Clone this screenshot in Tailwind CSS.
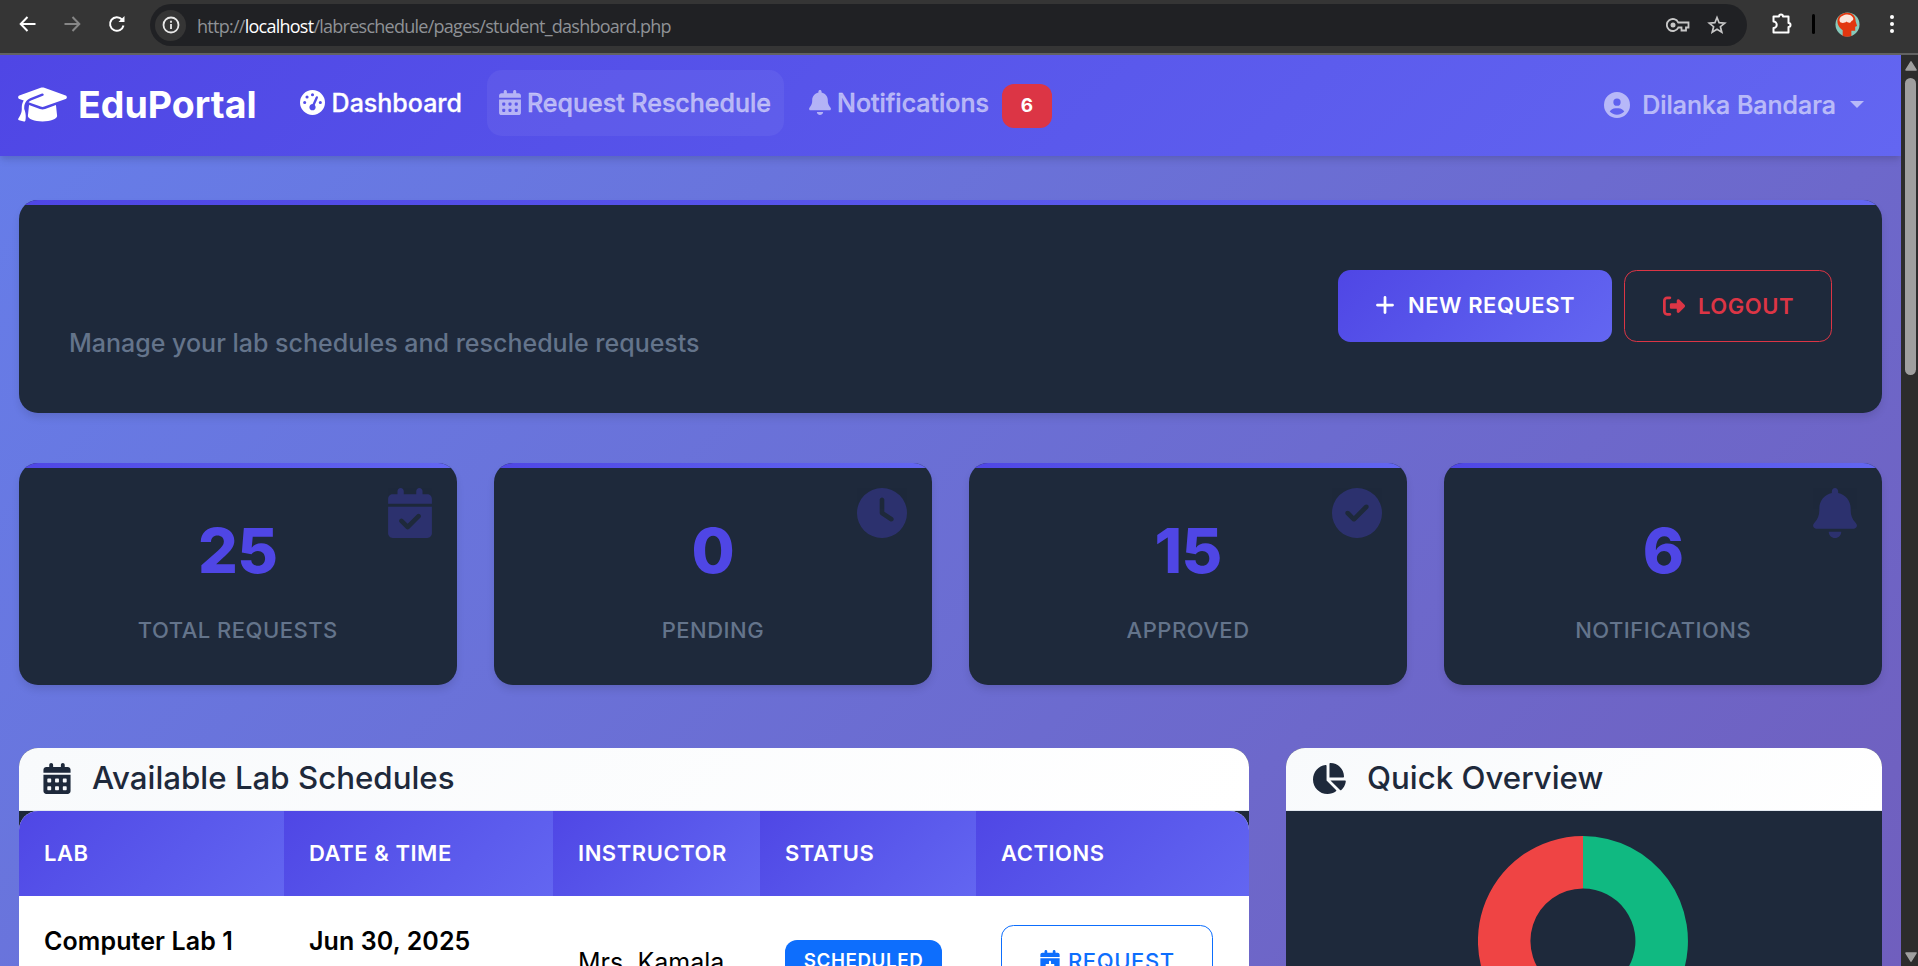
<!DOCTYPE html>
<html lang="en">
<head>
<meta charset="utf-8">
<title>EduPortal - Student Dashboard</title>
<script src="https://cdn.jsdelivr.net/npm/@tailwindcss/browser@4"></script>
</head>
<body class="w-[1918px] h-[966px] overflow-hidden flex flex-col bg-[#353535] font-[Inter,sans-serif]">
<svg class="hidden">
  <symbol id="cap" viewBox="0 0 640 512"><path d="M320 32c-8.1 0-16.1 1.4-23.7 4.1L15.8 137.4C6.3 140.9 0 149.9 0 160s6.3 19.1 15.8 22.6l57.9 20.9C57.3 229.3 48 259.8 48 291.9l0 28.1c0 28.4-10.8 57.7-22.3 80.8c-6.5 13-13.9 25.8-22.5 37.6C0 442.7-.9 448.3 .9 453.4s6 8.9 11.2 10.2l64 16c4.2 1.1 8.7 .3 12.4-2s6.3-6.1 7.1-10.4c8.6-42.8 4.3-81.2-2.1-108.7C90.3 344.3 86 329.8 80 316.5l0-24.6c0-30.2 10.2-58.7 27.9-81.5c12.9-15.5 29.6-28 49.2-35.7l157-61.7c8.2-3.2 17.5 .8 20.7 9s-.8 17.5-9 20.7l-157 61.7c-12.4 4.9-23.3 12.4-32.2 21.6l159.6 57.6c7.6 2.7 15.6 4.1 23.7 4.1s16.1-1.4 23.7-4.1L624.2 182.6c9.5-3.4 15.8-12.5 15.8-22.6s-6.3-19.1-15.8-22.6L343.7 36.1C336.1 33.4 328.1 32 320 32zM128 408c0 35.3 86 72 192 72s192-36.7 192-72L496.7 262.6 354.5 314c-11.1 4-22.8 6-34.5 6s-23.5-2-34.5-6L143.3 262.6 128 408z"/></symbol>
  <symbol id="gauge" viewBox="0 0 512 512"><path fill-rule="evenodd" d="M0 256a256 256 0 1 1 512 0A256 256 0 1 1 0 256zM288 96a32 32 0 1 0 -64 0 32 32 0 1 0 64 0zM256 416c35.3 0 64-28.7 64-64c0-17.4-6.9-33.1-18.1-44.6L366 161.7c5.3-12.1-.2-26.3-12.3-31.6s-26.3 .2-31.6 12.3L257.9 288c-.6 0-1.3 0-1.9 0c-35.3 0-64 28.7-64 64s28.7 64 64 64zM176 144a32 32 0 1 0 -64 0 32 32 0 1 0 64 0zM96 288a32 32 0 1 0 0-64 32 32 0 1 0 0 64zm352-32a32 32 0 1 0 -64 0 32 32 0 1 0 64 0z"/></symbol>
  <symbol id="days" viewBox="0 0 448 512"><path d="M128 0c17.7 0 32 14.3 32 32l0 32 128 0 0-32c0-17.7 14.3-32 32-32s32 14.3 32 32l0 32 48 0c26.5 0 48 21.5 48 48l0 48L0 160l0-48C0 85.5 21.5 64 48 64l48 0 0-32c0-17.7 14.3-32 32-32zM0 192l448 0 0 272c0 26.5-21.5 48-48 48L48 512c-26.5 0-48-21.5-48-48L0 192zm64 80l0 32c0 8.8 7.2 16 16 16l32 0c8.8 0 16-7.2 16-16l0-32c0-8.8-7.2-16-16-16l-32 0c-8.8 0-16 7.2-16 16zm128 0l0 32c0 8.8 7.2 16 16 16l32 0c8.8 0 16-7.2 16-16l0-32c0-8.8-7.2-16-16-16l-32 0c-8.8 0-16 7.2-16 16zm144-16c-8.8 0-16 7.2-16 16l0 32c0 8.8 7.2 16 16 16l32 0c8.8 0 16-7.2 16-16l0-32c0-8.8-7.2-16-16-16l-32 0zM64 400l0 32c0 8.8 7.2 16 16 16l32 0c8.8 0 16-7.2 16-16l0-32c0-8.8-7.2-16-16-16l-32 0c-8.8 0-16 7.2-16 16zm144-16c-8.8 0-16 7.2-16 16l0 32c0 8.8 7.2 16 16 16l32 0c8.8 0 16-7.2 16-16l0-32c0-8.8-7.2-16-16-16l-32 0zm112 16l0 32c0 8.8 7.2 16 16 16l32 0c8.8 0 16-7.2 16-16l0-32c0-8.8-7.2-16-16-16l-32 0c-8.8 0-16 7.2-16 16z"/></symbol>
  <symbol id="bell" viewBox="0 0 448 512"><path d="M224 0c-17.7 0-32 14.3-32 32l0 19.2C119 66 64 130.6 64 208l0 18.8c0 47-17.3 92.4-48.5 127.6l-7.4 8.3c-8.4 9.4-10.4 22.9-5.3 34.4S19.4 416 32 416l384 0c12.6 0 24-7.4 29.2-18.9s3.1-25-5.3-34.4l-7.4-8.3C401.3 319.2 384 273.9 384 226.8l0-18.8c0-77.4-55-142-128-156.8L256 32c0-17.7-14.3-32-32-32zm45.3 493.3c12-12 18.7-28.3 18.7-45.3l-64 0-64 0c0 17 6.7 33.3 18.7 45.3s28.3 18.7 45.3 18.7s33.3-6.7 45.3-18.7z"/></symbol>
  <symbol id="user" viewBox="0 0 512 512"><path fill-rule="evenodd" d="M399 384.2C376.9 345.8 335.4 320 288 320l-64 0c-47.4 0-88.9 25.8-111 64.2c35.2 39.2 86.2 63.8 143 63.8s107.8-24.7 143-63.8zM0 256a256 256 0 1 1 512 0A256 256 0 1 1 0 256zm256 16a72 72 0 1 0 0-144 72 72 0 1 0 0 144z"/></symbol>
  <symbol id="plus" viewBox="0 0 448 512"><path d="M256 80c0-17.7-14.3-32-32-32s-32 14.3-32 32l0 144L48 224c-17.7 0-32 14.3-32 32s14.3 32 32 32l144 0 0 144c0 17.7 14.3 32 32 32s32-14.3 32-32l0-144 144 0c17.7 0 32-14.3 32-32s-14.3-32-32-32l-144 0 0-144z"/></symbol>
  <symbol id="out" viewBox="0 0 512 512"><path d="M377.9 105.9L500.7 228.7c7.2 7.2 11.3 17.1 11.3 27.3s-4.1 20.1-11.3 27.3L377.9 406.1c-6.4 6.4-15 9.9-24 9.9c-18.7 0-33.9-15.2-33.9-33.9l0-62.1-128 0c-17.7 0-32-14.3-32-32l0-64c0-17.7 14.3-32 32-32l128 0 0-62.1c0-18.7 15.2-33.9 33.9-33.9c9 0 17.6 3.6 24 9.9zM160 96L96 96c-17.7 0-32 14.3-32 32l0 256c0 17.7 14.3 32 32 32l64 0c17.7 0 32 14.3 32 32s-14.3 32-32 32l-64 0c-53 0-96-43-96-96L0 128C0 75 43 32 96 32l64 0c17.7 0 32 14.3 32 32s-14.3 32-32 32z"/></symbol>
  <symbol id="calcheck" viewBox="0 0 448 512"><path d="M128 0c17.7 0 32 14.3 32 32l0 32 128 0 0-32c0-17.7 14.3-32 32-32s32 14.3 32 32l0 32 48 0c26.5 0 48 21.5 48 48l0 48L0 160l0-48C0 85.5 21.5 64 48 64l48 0 0-32c0-17.7 14.3-32 32-32zM0 192l448 0 0 272c0 26.5-21.5 48-48 48L48 512c-26.5 0-48-21.5-48-48L0 192zM329 305c9.4-9.4 9.4-24.6 0-33.9s-24.6-9.4-33.9 0l-95 95-47-47c-9.4-9.4-24.6-9.4-33.9 0s-9.4 24.6 0 33.9l64 64c9.4 9.4 24.6 9.4 33.9 0L329 305z"/></symbol>
  <symbol id="clock" viewBox="0 0 512 512"><path fill-rule="evenodd" d="M256 0a256 256 0 1 1 0 512A256 256 0 1 1 256 0zM232 120l0 136c0 8 4 15.5 10.7 20l96 64c11 7.4 25.9 4.4 33.3-6.7s4.4-25.9-6.7-33.3L280 243.2 280 120c0-13.3-10.7-24-24-24s-24 10.7-24 24z"/></symbol>
  <symbol id="check" viewBox="0 0 512 512"><path fill-rule="evenodd" d="M256 512A256 256 0 1 0 256 0a256 256 0 1 0 0 512zM369 209L241 337c-9.4 9.4-24.6 9.4-33.9 0l-64-64c-9.4-9.4-9.4-24.6 0-33.9s24.6-9.4 33.9 0l47 47L335 175c9.4-9.4 24.6-9.4 33.9 0s9.4 24.6 0 33.9z"/></symbol>
  <symbol id="pie" viewBox="0 0 576 512"><path d="M304 240l0-223.4c0-9 7-16.6 16-16.6C443.7 0 544 100.3 544 224c0 9-7.6 16-16.6 16L304 240zM32 272C32 150.7 122.1 50.3 239 34.3c9.2-1.3 17 6.1 17 15.4L256 288 412.5 444.5c6.7 6.7 6.2 17.7-1.5 23.1C371.8 495.6 323.8 512 272 512C139.5 512 32 404.6 32 272zm526.4 16c9.3 0 16.6 7.8 15.4 17c-7.7 55.9-34.6 105.6-73.9 142.3c-6 5.6-15.4 5.2-21.2-.7L320 288l238.4 0z"/></symbol>
  <symbol id="calplus" viewBox="0 0 448 512"><path fill-rule="evenodd" d="M128 0c17.7 0 32 14.3 32 32l0 32 128 0 0-32c0-17.7 14.3-32 32-32s32 14.3 32 32l0 32 48 0c26.5 0 48 21.5 48 48l0 48L0 160l0-48C0 85.5 21.5 64 48 64l48 0 0-32c0-17.7 14.3-32 32-32zM0 192l448 0 0 272c0 26.5-21.5 48-48 48L48 512c-26.5 0-48-21.5-48-48L0 192zM248 272c0-13.3-10.7-24-24-24s-24 10.7-24 24v56H144c-13.3 0-24 10.7-24 24s10.7 24 24 24h56v56c0 13.3 10.7 24 24 24s24-10.7 24-24V376h56c13.3 0 24-10.7 24-24s-10.7-24-24-24H248V272z"/></symbol>
</svg>

<!-- Browser toolbar -->
<header class="h-[55px] shrink-0 flex items-start border-b-2 border-[#626262] bg-[#353535]">
  <div class="w-[150px] h-[48px] pl-[18px] flex items-center gap-[26px]">
    <svg class="w-[19px] h-[18px]" viewBox="0 0 19 18" fill="none" stroke="#fff" stroke-width="2"><path d="M17.5 9H3M9.5 2L2.7 9l6.800 7"/></svg>
    <svg class="w-[19px] h-[18px]" viewBox="0 0 19 18" fill="none" stroke="#868686" stroke-width="2"><path d="M1.500 9H16M9.500 2l6.800 7-6.800 7"/></svg>
    <svg class="w-[18px] h-[18px]" viewBox="0 0 18 18" fill="none" stroke="#fff" stroke-width="2"><path d="M15.500 10.500A6.800 6.800 0 1 1 14 4.500"/><path d="M16.500 1v6h-6z" fill="#fff" stroke="none"/></svg>
  </div>
  <div class="mt-1 w-[1597px] h-[42px] rounded-full bg-[#202124] flex items-center pl-[5px] pr-[20px]">
    <div class="size-[31px] rounded-full bg-[#353535] grid place-items-center">
      <svg class="size-[18px]" viewBox="0 0 18 18" fill="none" stroke="#e8e8e8" stroke-width="1.800"><circle cx="9" cy="9" r="7.500"/><path d="M9 8v5M9 4.700v2"/></svg>
    </div>
    <div class="ml-[11px] mt-px flex-1 text-[18px] leading-[24px] whitespace-nowrap font-['Open_Sans',sans-serif] text-[#8f9296] tracking-[-0.74px]">http://<span class="text-white">localhost</span>/labreschedule/pages/student_dashboard.php</div>
    <svg class="w-[24px] h-[16px]" viewBox="0 0 24 16" fill="none" stroke="#c7c7c7" stroke-width="1.800"><path d="M12.300 5.500A6 6 0 1 0 12.300 10.500H15.500V13.500H20V10.500H22.500V5.500z"/><circle cx="7" cy="8" r="2.500" fill="#c7c7c7" stroke="none"/></svg>
    <svg class="ml-[17px] size-[20px]" viewBox="0 0 20 20" fill="none" stroke="#c7c7c7" stroke-width="1.700"><path d="M10 2.500l2.100 5.200 5.600.4-4.300 3.600 1.400 5.500L10 14.200l-4.800 3 1.400-5.500L2.300 8.100l5.600-.4z"/></svg>
  </div>
  <div class="h-[48px] flex-1 flex items-center">
    <svg class="ml-[24px] size-[22px]" viewBox="0 0 22 22" fill="none" stroke="#fff" stroke-width="2" stroke-linejoin="round"><path d="M2.500 3.500H8a2 2 0 0 1 4 0h5.500V10a2 2 0 0 1 0 4v5.500H2.500V15a3.200 3.200 0 0 0 0-6.500z"/></svg>
    <div class="ml-[19px] w-[3px] h-[20px] rounded bg-black"></div>
    <svg class="ml-[20px] size-[25px]" viewBox="0 0 26 26"><circle cx="13" cy="13" r="12.500" fill="#86c9bb"/><path d="M8 24.500V19C3.500 16 1.500 11 3 6.500 5 2 10 .5 13 .7c6 .2 8.500 4.300 8.500 9.300l1.500 4.500-2 .8v4.200h-4v5.500c-3 1-6 1-9 0z" fill="#e2360f"/><path d="M5 10c-1-2 0-5 3-6 3-2 8-2 10 1 2 2 1 4-1 4.500-1 2.500-4 1.500-5 .5-2 2-6 2-7 0z" fill="#fbe5dc"/></svg>
    <svg class="ml-[29px] w-[6px] h-[20px]" viewBox="0 0 6 20" fill="#fff"><circle cx="3" cy="3" r="2"/><circle cx="3" cy="10" r="2"/><circle cx="3" cy="17" r="2"/></svg>
  </div>
</header>

<div class="flex h-[911px]">
  <div class="w-[1901px] h-[911px] overflow-hidden bg-[linear-gradient(135deg,#667eea_0%,#764ba2_100%)] bg-[length:1901px_2684px] bg-no-repeat">
    <!-- Navigation -->
    <nav class="h-[101px] pl-[18px] pr-[37px] flex items-center bg-linear-135 from-[#4f46e5] to-[#6366f1] shadow-[0_5px_8px_-1px_rgba(0,0,0,0.1),0_3px_5px_-1px_rgba(0,0,0,0.06)] text-white/55 text-[25px] leading-[38px] font-medium">
      <a class="-mt-[2px] flex items-center text-white font-bold text-[37.5px]"><svg class="w-[49px] h-[39px] fill-current"><use href="#cap"/></svg><span class="ml-[11px]">EduPortal</span></a>
      <div class="flex items-center ml-[31px] -mt-[6px]">
        <a class="h-[66px] px-[12px] flex items-center text-white"><svg class="size-[25px] fill-current"><use href="#gauge"/></svg><span class="ml-[7px] [-webkit-text-stroke:0.3px]">Dashboard</span></a>
        <a class="ml-[13px] w-[297px] h-[66px] px-[12px] flex items-center rounded-[15px] bg-white/5"><svg class="w-[22px] h-[25px] fill-current"><use href="#days"/></svg><span class="ml-[6px] [-webkit-text-stroke:0.3px]">Request Reschedule</span></a>
        <a class="ml-[13px] h-[66px] px-[12px] flex items-center"><svg class="w-[22px] h-[25px] fill-current"><use href="#bell"/></svg><span class="ml-[6px] [-webkit-text-stroke:0.3px]">Notifications</span><span class="ml-[13px] mt-[6px] w-[50px] h-[44px] rounded-[12px] bg-[#dc3545] text-white text-[19px] font-bold grid place-items-center">6</span></a>
      </div>
      <a class="ml-auto -mt-[2px] flex items-center"><svg class="size-[26px] fill-current"><use href="#user"/></svg><span class="ml-[12px] [-webkit-text-stroke:0.2px]">Dilanka Bandara</span><svg class="ml-[14px] w-[14px] h-[7px] fill-current" viewBox="0 0 14 7"><path d="M0 0h14L7 7z"/></svg></a>
    </nav>

    <main class="px-[19px] pt-[44px]">
      <!-- Welcome card -->
      <section class="h-[213px] rounded-[19px] overflow-hidden bg-[#1e293b] flex flex-col shadow-[0_5px_8px_-1px_rgba(0,0,0,0.12)]">
        <div class="h-[5px] bg-linear-to-r from-[#4f46e5] to-[#6366f1]"></div>
        <div class="flex-1 flex items-start justify-between px-[50px]">
          <p class="mt-[119px] text-[25px] leading-[38px] font-medium text-[#64748b]">Manage your lab schedules and reschedule requests</p>
          <div class="mt-[65px] flex gap-[12px] text-[22px] leading-[30px] font-semibold">
            <a class="w-[274px] h-[72px] pb-[2px] rounded-[12.5px] bg-linear-135 from-[#4f46e5] to-[#6366f1] text-white flex items-center pl-[37px]"><svg class="w-[20px] h-[22px] fill-current"><use href="#plus"/></svg><span class="ml-[13px] tracking-[0.55px]">NEW REQUEST</span></a>
            <a class="w-[208px] h-[72px] rounded-[12.5px] border border-[#dc3545] text-[#dc3545] flex items-center pl-[38px]"><svg class="size-[22px] fill-current"><use href="#out"/></svg><span class="ml-[13px] tracking-[0.55px]">LOGOUT</span></a>
          </div>
        </div>
      </section>

      <!-- Statistics -->
      <section class="mt-[50px] grid grid-cols-4 gap-x-[37.500px] text-center">
        <div class="relative h-[222px] rounded-[19px] overflow-hidden bg-[#1e293b] shadow-[0_5px_8px_-1px_rgba(0,0,0,0.12)]"><div class="h-[5px] bg-linear-to-r from-[#4f46e5] to-[#6366f1]"></div><svg class="absolute top-[25px] right-[25px] w-[44px] h-[50px] fill-[#4f46e5] opacity-30"><use href="#calcheck"/></svg><div class="mt-[45px] text-[62.500px] leading-[75px] font-extrabold tracking-[-0.5px] text-[#4f46e5]">25</div><div class="mt-[27px] text-[22px] leading-[30px] font-medium tracking-[0.500px] text-[#64748b]">TOTAL REQUESTS</div></div>
        <div class="relative h-[222px] rounded-[19px] overflow-hidden bg-[#1e293b] shadow-[0_5px_8px_-1px_rgba(0,0,0,0.12)]"><div class="h-[5px] bg-linear-to-r from-[#4f46e5] to-[#6366f1]"></div><svg class="absolute top-[25px] right-[25px] size-[50px] fill-[#4f46e5] opacity-30"><use href="#clock"/></svg><div class="mt-[45px] text-[62.500px] leading-[75px] font-extrabold tracking-[-0.5px] text-[#4f46e5]">0</div><div class="mt-[27px] text-[22px] leading-[30px] font-medium tracking-[0.500px] text-[#64748b]">PENDING</div></div>
        <div class="relative h-[222px] rounded-[19px] overflow-hidden bg-[#1e293b] shadow-[0_5px_8px_-1px_rgba(0,0,0,0.12)]"><div class="h-[5px] bg-linear-to-r from-[#4f46e5] to-[#6366f1]"></div><svg class="absolute top-[25px] right-[25px] size-[50px] fill-[#4f46e5] opacity-30"><use href="#check"/></svg><div class="mt-[45px] text-[62.500px] leading-[75px] font-extrabold tracking-[-0.5px] text-[#4f46e5]">15</div><div class="mt-[27px] text-[22px] leading-[30px] font-medium tracking-[0.500px] text-[#64748b]">APPROVED</div></div>
        <div class="relative h-[222px] rounded-[19px] overflow-hidden bg-[#1e293b] shadow-[0_5px_8px_-1px_rgba(0,0,0,0.12)]"><div class="h-[5px] bg-linear-to-r from-[#4f46e5] to-[#6366f1]"></div><svg class="absolute top-[25px] right-[25px] w-[44px] h-[50px] fill-[#4f46e5] opacity-30"><use href="#bell"/></svg><div class="mt-[45px] text-[62.500px] leading-[75px] font-extrabold tracking-[-0.5px] text-[#4f46e5]">6</div><div class="mt-[27px] text-[22px] leading-[30px] font-medium tracking-[0.500px] text-[#64748b]">NOTIFICATIONS</div></div>
      </section>

      <section class="mt-[63px] flex gap-[37px]">
        <!-- Lab schedule table -->
        <div class="w-[1230px] h-[260px] rounded-t-[19px] overflow-hidden bg-[#1e293b]">
          <h2 class="h-[63px] pl-[24px] pb-[2px] flex items-center border-b border-[#e2e8f0] bg-linear-135 from-[#f8fafc] to-white text-[31.250px] leading-[38px] font-medium text-[#1e293b]"><svg class="w-[28px] h-[31px] fill-current"><use href="#days"/></svg><span class="ml-[21px]">Available Lab Schedules</span></h2>
          <div class="rounded-t-[19px] overflow-hidden bg-white">
            <div class="h-[85px] grid grid-cols-[265px_269px_207px_216px_273px] text-white text-[22px] leading-[85px] font-semibold tracking-[0.540px]">
              <div class="pl-[25px] bg-linear-135 from-[#4f46e5] to-[#6366f1]">LAB</div>
              <div class="pl-[25px] bg-linear-135 from-[#4f46e5] to-[#6366f1]">DATE &amp; TIME</div>
              <div class="pl-[25px] bg-linear-135 from-[#4f46e5] to-[#6366f1]">INSTRUCTOR</div>
              <div class="pl-[25px] bg-linear-135 from-[#4f46e5] to-[#6366f1]">STATUS</div>
              <div class="pl-[25px] bg-linear-135 from-[#4f46e5] to-[#6366f1]">ACTIONS</div>
            </div>
            <div class="h-[112px] grid grid-cols-[265px_269px_207px_216px_273px] text-black text-[25px] leading-[38px]">
              <div class="pl-[25px] pt-[26px] font-semibold tracking-[0.100px]">Computer Lab 1</div>
              <div class="pl-[25px] pt-[26px] font-semibold tracking-[0.100px]">Jun 30, 2025</div>
              <div class="pl-[25px] pt-[47px]">Mrs. Kamala</div>
              <div class="pl-[25px] pt-[44px]"><span class="w-[157px] h-[42px] rounded-[12px] bg-[#0d6efd] text-white text-[18.750px] font-semibold tracking-[0.600px] grid place-items-center">SCHEDULED</span></div>
              <div class="pl-[25px] pt-[29px]"><a class="w-[212px] h-[72px] rounded-[12.5px] border border-[#0d6efd] text-[#0d6efd] text-[22px] font-medium flex items-center pl-[38px]"><svg class="w-[20px] h-[22px] fill-current"><use href="#calplus"/></svg><span class="ml-[8px] tracking-[0.600px]">REQUEST</span></a></div>
            </div>
          </div>
        </div>

        <!-- Overview chart -->
        <div class="w-[596px] h-[260px] rounded-t-[19px] overflow-hidden bg-[#1e293b]">
          <h2 class="h-[63px] pl-[25px] pb-[2px] flex items-center border-b border-[#e2e8f0] bg-linear-135 from-[#f8fafc] to-white text-[31.250px] leading-[38px] font-medium text-[#1e293b]"><svg class="w-[35px] h-[31px] fill-current"><use href="#pie"/></svg><span class="ml-[21px]">Quick Overview</span></h2>
          <svg class="ml-[192px] mt-[25px] size-[210px]" viewBox="-105 -105 210 210"><path fill="#ef4444" d="M-61.700 85A105 105 0 0 1 0 -105V-52.500A52.500 52.500 0 0 0 -30.900 42.500z"/><path fill="#10b981" d="M0 -105A105 105 0 1 1 -61.700 85L-30.900 42.500A52.500 52.500 0 1 0 0 -52.500z"/></svg>
        </div>
      </section>
    </main>
  </div>

  <!-- Scrollbar -->
  <div class="w-[17px] h-[911px] bg-[#2c2c2c] flex flex-col items-center">
    <svg class="mt-[6px] ml-[2px] w-[12px] h-[10px] shrink-0" viewBox="0 0 12 10" fill="#9f9f9f"><path d="M6 0.800L11 9H1z" stroke="#9f9f9f" stroke-width="1.500" stroke-linejoin="round"/></svg>
    <div class="mt-[7px] ml-[2px] w-[11px] h-[297px] rounded-full bg-[#9f9f9f]"></div>
    <svg class="mt-auto mb-[4px] ml-[2px] w-[12px] h-[10px] shrink-0" viewBox="0 0 12 10" fill="#9f9f9f"><path d="M6 9.200L11 1H1z" stroke="#9f9f9f" stroke-width="1.500" stroke-linejoin="round"/></svg>
  </div>
</div>
</body>
</html>
